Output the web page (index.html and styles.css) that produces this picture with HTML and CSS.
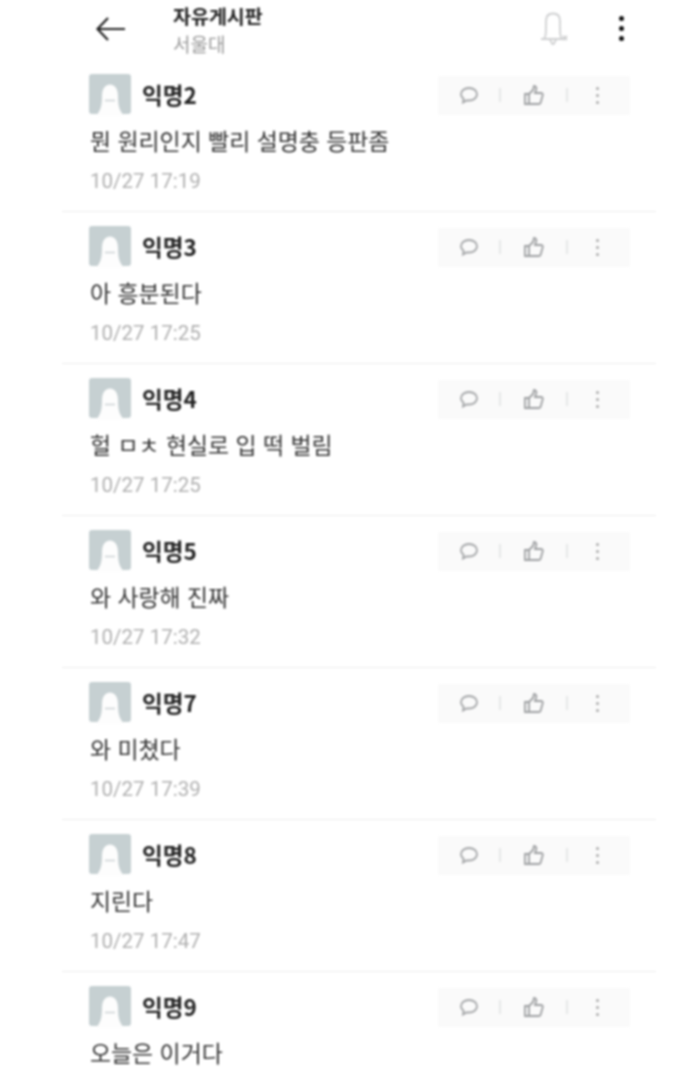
FILE: index.html
```html
<!DOCTYPE html>
<html lang="ko">
<head>
    <meta charset="UTF-8">
    <meta name="viewport" content="width=device-width, initial-scale=1.0">
    <title>자유게시판</title>
    <link rel="stylesheet" href="styles.css">
</head>
<body>
    <svg class="sprites" width="0" height="0">
        <symbol id="avatar" viewBox="0 0 42 42">
            <rect width="42" height="40" rx="3" fill="#c6d0d2"/>
            <path d="M7 42c5-6 6-11 6-20 0-8 4-11.500 8-11.500s8 3.500 8 11.500c0 9 1 14 6 20z" fill="#fdfdfd"/>
            <path d="M16 26.500h10" stroke="#ccd2d4" stroke-width="1.500"/>
        </symbol>
        <symbol id="comment" viewBox="0 0 20 20">
            <path d="M10 3c4.500 0 8 2.700 8 6.300s-3.500 6.200-8 6.200H7.500L4 17.500l.6-3.700C3 12.700 2 11.100 2 9.300 2 5.700 5.500 3 10 3z" fill="none" stroke="#a4a6a8" stroke-width="1.800"/>
        </symbol>
        <symbol id="thumb" viewBox="0 0 22 22">
            <path d="M2 10h4v10H2zM6 10l4-4 1-4c2 0 3 2 2 4l-1 3h6c2 0 2 2 1.500 3l-2 7c-.3 1-1 1-2 1H6" fill="none" stroke="#9ea0a2" stroke-width="1.800"/>
        </symbol>
    </svg>

    <div class="page">
        <header class="topbar">
            <svg class="back-icon" viewBox="0 0 32 26">
                <path d="M30 13H3M13 2 2.500 13 13 24" fill="none" stroke="#222" stroke-width="2.200"/>
            </svg>
            <div class="board">
                <div class="board-name">자유게시판</div>
                <div class="board-school">서울대</div>
            </div>
            <svg class="bell-icon" viewBox="0 0 36 36">
                <path d="M4 30h24M7 30c2-2 2-6 2-18 0-5 2-7.500 7-7.500s7 2.500 7 7.500c0 12 0 16 2 18M13 31l3 5 3-5M26 27l4 4M30 27l-4 4" fill="none" stroke="#cfd0d1" stroke-width="1.800"/>
            </svg>
            <div class="top-menu"><i></i><i></i><i></i></div>
        </header>

        <article class="comment">
            <div class="comment-head">
                <svg class="avatar"><use href="#avatar"/></svg>
                <span class="name">익명2</span>
                <div class="actions">
                    <svg class="act-comment"><use href="#comment"/></svg><b></b>
                    <svg class="act-thumb"><use href="#thumb"/></svg><b></b>
                    <div class="act-more"><i></i><i></i><i></i></div>
                </div>
            </div>
            <p class="body-text">뭔 원리인지 빨리 설명충 등판좀</p>
            <time class="date">10/27 17:19</time>
        </article>

        <article class="comment">
            <div class="comment-head">
                <svg class="avatar"><use href="#avatar"/></svg>
                <span class="name">익명3</span>
                <div class="actions">
                    <svg class="act-comment"><use href="#comment"/></svg><b></b>
                    <svg class="act-thumb"><use href="#thumb"/></svg><b></b>
                    <div class="act-more"><i></i><i></i><i></i></div>
                </div>
            </div>
            <p class="body-text">아 흥분된다</p>
            <time class="date">10/27 17:25</time>
        </article>

        <article class="comment">
            <div class="comment-head">
                <svg class="avatar"><use href="#avatar"/></svg>
                <span class="name">익명4</span>
                <div class="actions">
                    <svg class="act-comment"><use href="#comment"/></svg><b></b>
                    <svg class="act-thumb"><use href="#thumb"/></svg><b></b>
                    <div class="act-more"><i></i><i></i><i></i></div>
                </div>
            </div>
            <p class="body-text">헐 ㅁㅊ 현실로 입 떡 벌림</p>
            <time class="date">10/27 17:25</time>
        </article>

        <article class="comment">
            <div class="comment-head">
                <svg class="avatar"><use href="#avatar"/></svg>
                <span class="name">익명5</span>
                <div class="actions">
                    <svg class="act-comment"><use href="#comment"/></svg><b></b>
                    <svg class="act-thumb"><use href="#thumb"/></svg><b></b>
                    <div class="act-more"><i></i><i></i><i></i></div>
                </div>
            </div>
            <p class="body-text">와 사랑해 진짜</p>
            <time class="date">10/27 17:32</time>
        </article>

        <article class="comment">
            <div class="comment-head">
                <svg class="avatar"><use href="#avatar"/></svg>
                <span class="name">익명7</span>
                <div class="actions">
                    <svg class="act-comment"><use href="#comment"/></svg><b></b>
                    <svg class="act-thumb"><use href="#thumb"/></svg><b></b>
                    <div class="act-more"><i></i><i></i><i></i></div>
                </div>
            </div>
            <p class="body-text">와 미쳤다</p>
            <time class="date">10/27 17:39</time>
        </article>

        <article class="comment">
            <div class="comment-head">
                <svg class="avatar"><use href="#avatar"/></svg>
                <span class="name">익명8</span>
                <div class="actions">
                    <svg class="act-comment"><use href="#comment"/></svg><b></b>
                    <svg class="act-thumb"><use href="#thumb"/></svg><b></b>
                    <div class="act-more"><i></i><i></i><i></i></div>
                </div>
            </div>
            <p class="body-text">지린다</p>
            <time class="date">10/27 17:47</time>
        </article>

        <article class="comment">
            <div class="comment-head">
                <svg class="avatar"><use href="#avatar"/></svg>
                <span class="name">익명9</span>
                <div class="actions">
                    <svg class="act-comment"><use href="#comment"/></svg><b></b>
                    <svg class="act-thumb"><use href="#thumb"/></svg><b></b>
                    <div class="act-more"><i></i><i></i><i></i></div>
                </div>
            </div>
            <p class="body-text">오늘은 이거다</p>
        </article>
    </div>
</body>
</html>
```

FILE: styles.css
```css
/* General page styling */
html, body {
    margin: 0;
    height: 1073px;
    overflow: hidden;
    background: #fff;
}

body {
    font-family: "Noto Sans CJK KR", "Noto Sans", sans-serif;
    color: #333;
}

.sprites {
    display: block;
}

/* the reference is a soft, recompressed capture */
.page {
    width: 594px;
    height: 1073px;
    margin-left: 62px;
    overflow: hidden;
    filter: blur(0.8px);
}

/* Top bar */
.topbar {
    height: 60px;
    display: flex;
    align-items: flex-start;
}

.back-icon {
    width: 32px;
    height: 26px;
    margin: 16px 0 0 33px;
}

.board {
    margin-left: 46px;
    padding-top: 2px;
}

.board-name {
    font-size: 19.500px;
    line-height: 28px;
    font-weight: 700;
    color: #222;
}

.board-school {
    font-size: 19px;
    line-height: 28px;
    color: #999;
}

.bell-icon {
    width: 36px;
    height: 36px;
    margin: 9px 0 0 auto;
}

.top-menu {
    margin: 16px 32px 0 46px;
    display: flex;
    flex-direction: column;
    gap: 5px;
}

.top-menu i {
    width: 5px;
    height: 5px;
    border-radius: 50%;
    background: #111;
}

/* Comment rows */
.comment {
    height: 133px;
    padding: 15px 26px 3px 27px;
    border-bottom: 1px solid #ececec;
}

.comment:last-child {
    height: auto;
    padding-bottom: 0;
    border-bottom: 0;
}

.comment-head {
    display: flex;
    align-items: center;
    height: 40px;
}

.avatar {
    width: 42px;
    height: 42px;
    flex: none;
}

.name {
    margin: 0 0 2px 11px;
    font-size: 22.500px;
    font-weight: 700;
    color: #222;
}

.actions {
    margin-left: auto;
    width: 192px;
    height: 39px;
    display: flex;
    align-items: center;
    background: #fafafa;
    border-radius: 2px;
}

.actions b {
    width: 2px;
    height: 14px;
    background: #e6e7e7;
}

.act-comment {
    width: 20px;
    height: 20px;
    margin: 0 20px 0 21px;
}

.act-thumb {
    width: 22px;
    height: 22px;
    margin: 0 21px 0 22px;
}

.act-more {
    margin-left: 28px;
    display: flex;
    flex-direction: column;
    gap: 4px;
}

.act-more i {
    width: 3px;
    height: 3px;
    border-radius: 50%;
    background: #aaa;
}

.body-text {
    margin: 9px 0 0;
    padding-left: 1px;
    font-size: 22.900px;
    line-height: 32px;
    color: #333;
}

.date {
    display: block;
    margin-top: 12px;
    padding-left: 1px;
    font-size: 20.500px;
    line-height: 26px;
    color: #b0b0b0;
    font-family: Roboto, "Noto Sans", sans-serif;
}
```
